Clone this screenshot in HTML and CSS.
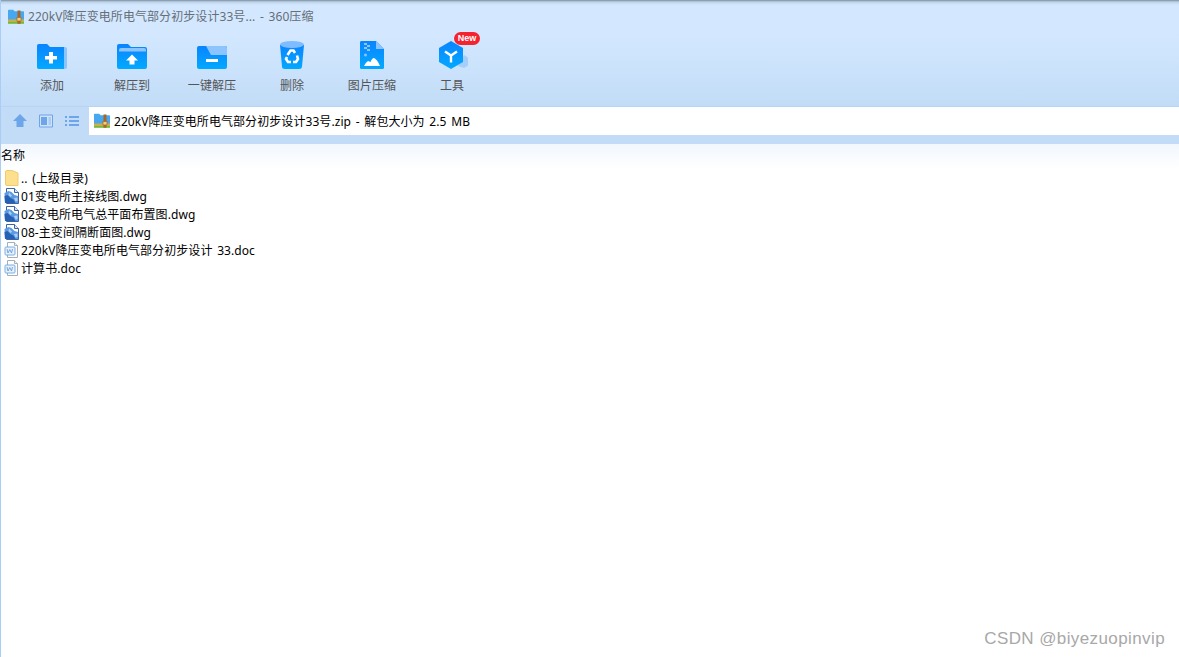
FILE: index.html
```html
<!DOCTYPE html>
<html lang="en">
<head>
    <meta charset="UTF-8">
    <meta name="viewport" content="width=device-width, initial-scale=1.0">
    <title>360压缩</title>
    <link rel="stylesheet" href="styles.css">
</head>
<body>
    <svg class="defs" width="0" height="0">
        <defs>
            <linearGradient id="blue" x1="0" y1="0" x2="0" y2="1">
                <stop offset="0" stop-color="#0a84ff"/>
                <stop offset="1" stop-color="#02a9ff"/>
            </linearGradient>
            <symbol id="zip" viewBox="0 0 16 16">
                <path d="M0 1.500q0-.8.8-.8h4.400l1.400 1.600h8.600q.8 0 .8.8V11H0z" fill="#45a8f0"/>
                <rect x="0" y="10.500" width="16" height="1.800" fill="#f2a02e"/>
                <rect x="0" y="12.300" width="16" height="2.500" fill="#74b83c"/>
                <rect x="9.500" y="1.500" width="3" height="13.300" fill="#a8662a"/>
                <rect x="9" y="8.500" width="4" height="3.500" fill="#f6cf6a" stroke="#a8662a" stroke-width=".7"/>
            </symbol>
            <symbol id="dwg" viewBox="0 0 16 16">
                <path d="M2.500.5h8l4 4v11h-12z" fill="#fff" stroke="#3a63a8"/>
                <path d="M10.500.5v4h4" fill="#dbe7f8" stroke="#3a63a8"/>
                <path d="M.5 5l4-2 3 1 3 3 3.500 1v7H1z" fill="#5b9ae2"/>
                <path d="M.5 8l3-1 3 3 3 1.500 2 3.500H1z" fill="#2560b4"/>
                <path d="M5 4.500l3 3-1.500 1.500-2-2zM10 10l3.500-.5V13l-2 .5z" fill="#a9cff3"/>
            </symbol>
            <symbol id="doc" viewBox="0 0 16 16">
                <path d="M3.500.5h7l3 3v12h-10z" fill="#fff" stroke="#a5aeba"/>
                <path d="M10.500.5v3h3" fill="#eef1f5" stroke="#a5aeba"/>
                <rect x="1" y="5" width="10" height="8" rx="1" fill="#e8f1fb" stroke="#79aee3"/>
                <path d="M3 7l1 4 1.800-3.500L7.500 11l1-4" fill="none" stroke="#6a9fd8" stroke-width=".9"/>
            </symbol>
        </defs>
    </svg>

    <div class="window">
        <div class="title-bar">
            <svg class="icon-16"><use href="#zip"/></svg>
            <span>220kV降压变电所电气部分初步设计33号... - 360压缩</span>
        </div>

        <div class="toolbar">
            <div class="tool">
                <svg class="tool-icon" viewBox="0 0 32 28">
                    <path d="M1 5q0-2 2-2h8l3 3h15q2 0 2 2v18q0 2-2 2H3q-2 0-2-2z" fill="#8cc4ff"/>
                    <path d="M1 5q0-2 2-2h8l3 3h14v22H3q-2 0-2-2z" fill="url(#blue)"/>
                    <path d="M13 11h4v4h4v3.500h-4v4h-4v-4H9V15h4z" fill="#fff"/>
                </svg>
                <span>添加</span>
            </div>
            <div class="tool">
                <svg class="tool-icon" viewBox="0 0 32 28">
                    <path d="M1 5q0-2 2-2h9l3 3h14q2 0 2 2v18q0 2-2 2H3q-2 0-2-2z" fill="url(#blue)"/>
                    <path d="M3 9q0-2 2-2h23q2 0 2 2v1.500H3z" fill="#8cc4ff"/>
                    <path d="M16 13.500l6 6h-3.500v4h-5v-4H10z" fill="#fff"/>
                </svg>
                <span>解压到</span>
            </div>
            <div class="tool">
                <svg class="tool-icon" viewBox="0 0 32 28">
                    <path d="M1 7q0-2 2-2h26q2 0 2 2v19q0 2-2 2H3q-2 0-2-2z" fill="url(#blue)"/>
                    <path d="M10 5h19q2 0 2 2v7H15z" fill="#8cc4ff"/>
                    <rect x="10" y="18" width="12" height="3" fill="#fff"/>
                </svg>
                <span>一键解压</span>
            </div>
            <div class="tool">
                <svg class="tool-icon" viewBox="0 0 32 28">
                    <path d="M4 4h24l-2 21.500q-.2 2.500-3 2.500H9q-3 0-3-2.500z" fill="url(#blue)"/>
                    <ellipse cx="16" cy="3.500" rx="12" ry="3.500" fill="#7dbcff"/>
                    <g fill="none" stroke="#fff" stroke-width="2.600">
                        <path d="M11.500 14l3-4.500h3l1.500 2.500"/>
                        <path d="M21 14.500l1 3.500-2 3h-3"/>
                        <path d="M15 21h-3l-2-3 1-2"/>
                    </g>
                </svg>
                <span>删除</span>
            </div>
            <div class="tool">
                <svg class="tool-icon" viewBox="0 0 32 28">
                    <path d="M5 0Q4 0 4 1.500v25Q4 28 5.500 28h21q1.500 0 1.500-1.500V8l-8-8z" fill="url(#blue)"/>
                    <path d="M20 0l8 8h-8z" fill="#8cc4ff"/>
                    <path d="M8 2h3v2H8zm3 2h3v2h-3zM8 6h3v2H8zm3 2h3v2h-3z" fill="#8cc4ff"/>
                    <circle cx="9.500" cy="14" r="1.500" fill="#8cc4ff"/>
                    <path d="M8 25q1-3 4-5 1.500.5 2.500 1 1.500-4 3.500-4 3 1 6 8z" fill="#fff"/>
                </svg>
                <span>图片压缩</span>
            </div>
            <div class="tool">
                <svg class="tool-icon" viewBox="0 0 32 28">
                    <path d="M28 14l4 2.500v8L28 27l-6-2z" fill="#a5cffb"/>
                    <path d="M15 0l12 7v14l-12 7-12-7V7z" fill="url(#blue)"/>
                    <path d="M15 14.500v7M15 14.500l-6-4M15 14.500l6-4" fill="none" stroke="#fff" stroke-width="2.400"/>
                </svg>
                <span>工具</span>
                <em class="badge">New</em>
            </div>
        </div>

        <div class="nav-bar">
            <div class="nav-buttons">
                <svg class="nav-icon" viewBox="0 0 14 14"><path d="M7 0l7 7h-3.500v6h-7V7H0z" fill="#6da5ea"/></svg>
                <svg class="nav-icon" viewBox="0 0 14 14"><path d="M.5 1h13v12H.5z" fill="#cfe2f8" stroke="#6da5ea"/><rect x="2" y="3" width="6" height="8" fill="#6da5ea"/><rect x="9.500" y="3" width="2.500" height="8" fill="#a9ccf3"/></svg>
                <svg class="nav-icon" viewBox="0 0 14 14"><path d="M0 2h2v2H0zm4 0h10v2H4zM0 6h2v2H0zm4 0h10v2H4zM0 10h2v2H0zm4 0h10v2H4z" fill="#6da5ea"/></svg>
            </div>
            <div class="address">
                <svg class="icon-16"><use href="#zip"/></svg>
                <span>220kV降压变电所电气部分初步设计33号.zip - 解包大小为 2.5 MB</span>
            </div>
        </div>

        <div class="list-head">名称</div>

        <ul class="file-list">
            <li>
                <svg class="icon-16" viewBox="0 0 16 16"><path d="M1.500 2q0-1.500 1.500-1.500h5L14 3v12.500H3Q1.500 15.500 1.500 14z" fill="#fde08d" stroke="#eccb70"/></svg>
                <span>.. (上级目录)</span>
            </li>
            <li><svg class="icon-16"><use href="#dwg"/></svg><span>01变电所主接线图.dwg</span></li>
            <li><svg class="icon-16"><use href="#dwg"/></svg><span>02变电所电气总平面布置图.dwg</span></li>
            <li><svg class="icon-16"><use href="#dwg"/></svg><span>08-主变间隔断面图.dwg</span></li>
            <li><svg class="icon-16"><use href="#doc"/></svg><span>220kV降压变电所电气部分初步设计 33.doc</span></li>
            <li><svg class="icon-16"><use href="#doc"/></svg><span>计算书.doc</span></li>
        </ul>

        <div class="watermark">CSDN @biyezuopinvip</div>
    </div>
</body>
</html>
```

FILE: styles.css
```css
* {
    box-sizing: border-box;
}
html, body {
    height: 100%;
}
body {
    margin: 0;
    font-family: "Noto Sans", "Noto Sans CJK SC", sans-serif;
    font-size: 12px;
    letter-spacing: .07px;
    word-spacing: 1.5px;
    color: #000;
    background: #fff;
    overflow: hidden;
}
.defs {
    position: absolute;
}
.window {
    position: relative;
    height: 657px;
    border-left: 1px solid #a9cdf5;
}
.icon-16 {
    width: 16px;
    height: 16px;
    flex: none;
}

.title-bar {
    display: flex;
    align-items: center;
    gap: 4px;
    height: 34px;
    padding-left: 7px;
    color: #666e78;
    background: linear-gradient(to bottom, #7f8ea0 0, #bcd3ea 2px, #d3e8ff 5px);
    line-height: 16px;
}
.toolbar {
    display: flex;
    height: 73px;
    padding-left: 11px;
    background: linear-gradient(to bottom, #d3e8ff, #c2dcf7);
    border-bottom: 1px solid #b6d4f3;
}
.tool {
    position: relative;
    display: flex;
    flex-direction: column;
    align-items: center;
    width: 80px;
    padding-top: 7px;
    color: #555;
}
.tool-icon {
    width: 32px;
    height: 28px;
    overflow: visible;
}
.tool span {
    margin-top: 8px;
    line-height: 18px;
}
.badge {
    position: absolute;
    top: -2px;
    left: 42px;
    width: 26px;
    height: 13px;
    border-radius: 7px;
    background: #f5222f;
    color: #fff;
    font-family: "Liberation Sans", sans-serif;
    font-style: normal;
    font-size: 9px;
    font-weight: bold;
    line-height: 13px;
    text-align: center;
}

.nav-bar {
    display: flex;
    height: 37px;
    background: #c2dcf8;
    padding-bottom: 9px;
}
.nav-buttons {
    display: flex;
    align-items: center;
    gap: 12px;
    width: 88px;
    padding-left: 12px;
}
.nav-icon {
    width: 14px;
    height: 14px;
    flex: none;
}
.address {
    display: flex;
    align-items: center;
    gap: 4px;
    flex: 1;
    padding-left: 5px;
    background: #fff;
}

.list-head {
    height: 25px;
    line-height: 24px;
    background: linear-gradient(to bottom, #f1f7fe, #fff);
}
.file-list {
    list-style: none;
    margin: 0;
    padding: 0 0 0 3px;
}
.file-list li {
    display: flex;
    align-items: center;
    gap: 1px;
    height: 18px;
}
.watermark {
    position: absolute;
    right: 14px;
    bottom: 8px;
    font-family: "Liberation Sans", sans-serif;
    font-size: 17px;
    letter-spacing: .4px;
    word-spacing: 0;
    color: #a8a8a8;
}
```
